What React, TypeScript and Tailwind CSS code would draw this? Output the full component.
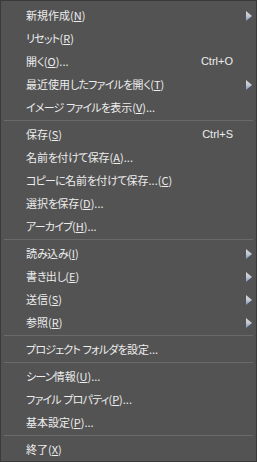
import React from "react";

type Item =
  | { sep: true }
  | { sep?: false; pre: string; key?: string; post?: string; shortcut?: string; sub?: boolean };

const items: Item[] = [
  { pre: "新規作成(", key: "N", post: ")", sub: true },
  { pre: "リセット(", key: "R", post: ")" },
  { pre: "開く(", key: "O", post: ")...", shortcut: "Ctrl+O" },
  { pre: "最近使用したファイルを開く(", key: "T", post: ")", sub: true },
  { pre: "イメージ ファイルを表示(", key: "V", post: ")..." },
  { sep: true },
  { pre: "保存(", key: "S", post: ")", shortcut: "Ctrl+S" },
  { pre: "名前を付けて保存(", key: "A", post: ")..." },
  { pre: "コピーに名前を付けて保存...(", key: "C", post: ")" },
  { pre: "選択を保存(", key: "D", post: ")..." },
  { pre: "アーカイブ(", key: "H", post: ")..." },
  { sep: true },
  { pre: "読み込み(", key: "I", post: ")", sub: true },
  { pre: "書き出し(", key: "E", post: ")", sub: true },
  { pre: "送信(", key: "S", post: ")", sub: true },
  { pre: "参照(", key: "R", post: ")", sub: true },
  { sep: true },
  { pre: "プロジェクト フォルダを設定..." },
  { sep: true },
  { pre: "シーン情報(", key: "U", post: ")..." },
  { pre: "ファイル プロパティ(", key: "P", post: ")..." },
  { pre: "基本設定(", key: "P", post: ")..." },
  { sep: true },
  { pre: "終了(", key: "X", post: ")" },
];

function Runs({ text }: { text: string }) {
  const parts = text.match(/[\u3040-\u30ff]+|[^\u3040-\u30ff]+/g) ?? [];
  return (
    <>
      {parts.map((p, i) =>
        /[\u3040-\u30ff]/.test(p) ? (
          <span key={i} className="tracking-[-0.8px] [font-feature-settings:'palt'_1]">
            {p}
          </span>
        ) : (
          <span key={i}>{p}</span>
        )
      )}
    </>
  );
}

function Arrow() {
  return (
    <svg width="6" height="10" viewBox="0 0 6 10">
      <defs>
        <linearGradient id="ag" x1="0" y1="0" x2="0" y2="1">
          <stop offset="0" stopColor="#d8d8d8" />
          <stop offset="0.5" stopColor="#c4c8d0" />
          <stop offset="1" stopColor="#6f92d0" />
        </linearGradient>
      </defs>
      <polygon points="0,0 6,5 0,10" fill="url(#ag)" />
    </svg>
  );
}

export default function App() {
  return (
    <div className="w-[257px] h-[462px] bg-[#535353] border border-[#3a3a3a] pt-[3px] flex flex-col text-[11px] text-[#ededed] font-['Noto_Sans_CJK_JP',sans-serif] leading-none select-none">
      {items.map((it, i) =>
        it.sep ? (
          <div key={i} className="h-[4px] pt-[1px] px-[3px]">
            <div className="h-[1px] bg-[#6a6a6a]" />
          </div>
        ) : (
          <div key={i} className="h-[23px] flex items-center pl-[25px]">
            <span className="flex-1 whitespace-pre">
              <Runs text={it.pre} />
              {it.key && <span className="underline underline-offset-[1px]">{it.key}</span>}
              {it.post}
            </span>
            <span className="font-['Liberation_Sans',sans-serif]">{it.shortcut ?? ""}</span>
            <span className="w-[23px] flex justify-end pr-[4px]">{it.sub ? <Arrow /> : null}</span>
          </div>
        )
      )}
    </div>
  );
}
